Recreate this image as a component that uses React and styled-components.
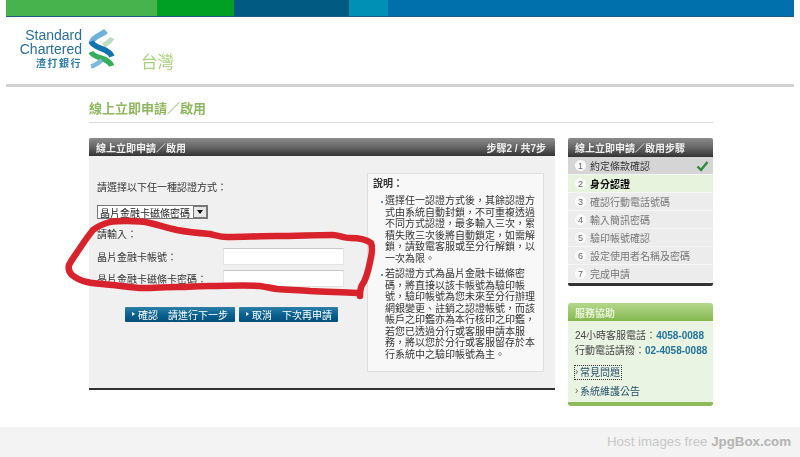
import React from "react";
import styled, { createGlobalStyle } from "styled-components";

const CJK = `"Liberation Sans", "Noto Sans CJK TC", sans-serif`;

const Global = createGlobalStyle`
  html, body { margin: 0; padding: 0; background: #fff; }
  body { font-family: ${CJK}; font-size: 10px; color: #333; }
  * { box-sizing: border-box; }
`;

const Page = styled.div`
  position: relative;
  width: 800px;
  height: 457px;
  overflow: hidden;
  display: flex;
  flex-direction: column;
  filter: blur(0.35px);
`;

const TopBar = styled.div`
  display: flex;
  height: 17px;
  margin: 0 6px 0 6px;
  border-bottom: 1px solid #1d5f82;
`;
const TopSeg = styled.div`
  width: ${(p) => p.$w}px;
  flex: ${(p) => (p.$w ? "none" : 1)};
  background: ${(p) => p.$c};
`;

const Brand = styled.header`
  height: 67px;
  margin: 0 6px;
  display: flex;
  align-items: flex-start;
  padding: 10px 0 0 0;
`;
const BrandWords = styled.div`
  width: 76px;
  text-align: right;
  color: #2b7098;
  font-size: 14px;
  line-height: 14px;
  padding-top: 1px;
  white-space: nowrap;
`;
const BrandCn = styled.div`
  font-size: 10px;
  font-weight: 700;
  letter-spacing: 1.5px;
  line-height: 16px;
  color: #2f7ea6;
`;
const Logo = styled.svg`
  width: 27px;
  height: 42px;
  margin: 1px 0 0 6px;
  flex: none;
`;
const Region = styled.div`
  margin: 25px 0 0 26px;
  color: #a8cf7c;
  font-size: 16.5px;
  line-height: 20px;
`;
const HeaderRule = styled.div`
  height: 3px;
  margin: 0 6px;
  background: #d2d2d2;
`;

const Content = styled.main`
  width: 624px;
  margin-left: 89px;
`;
const Title = styled.h1`
  margin: 14px 0 0;
  height: 21px;
  font-size: 13px;
  line-height: 16px;
  font-weight: 700;
  color: #8fb860;
  border-bottom: 1px solid #dcdcdc;
  box-sizing: content-box;
`;
const Columns = styled.div`
  margin-top: 15px;
  display: flex;
  gap: 13px;
`;

const MainPanel = styled.section`
  width: 466px;
  height: 252px;
  background: #f0f0f0;
  border-bottom: 2px solid #333;
  display: flex;
  flex-direction: column;
`;
const PanelHead = styled.div`
  height: 18px;
  flex: none;
  padding: 0 9px 0 7px;
  display: flex;
  align-items: center;
  justify-content: space-between;
  color: #eee;
  font-size: 10px;
  font-weight: 700;
  background: linear-gradient(#8b8b8b 0%, #666 50%, #333 100%);
  border-radius: 2px 2px 0 0;
`;
const PanelBody = styled.div`
  flex: 1;
  display: flex;
  padding: 17px 11px 0 8px;
`;
const FormCol = styled.div`
  width: 270px;
  color: #333;
`;
const Prompt = styled.div`
  height: 12px;
  margin-top: 9px;
  line-height: 12px;
`;
const SelectBox = styled.div`
  margin-top: 11px;
  width: 111px;
  height: 14px;
  background: #fff;
  border: 1px solid #777;
  display: flex;
  align-items: center;
  justify-content: space-between;
  padding-left: 2px;
  font-size: 10px;
  color: #222;
`;
const SelectArrow = styled.span`
  width: 14px;
  height: 12px;
  background: #e8e8e8;
  border: 1px solid #777;
  display: flex;
  align-items: center;
  justify-content: center;
  &::after {
    content: "";
    border: 3px solid transparent;
    border-top: 4px solid #111;
    border-bottom: 0;
  }
`;
const InputPrompt = styled.div`
  margin-top: 10px;
  line-height: 12px;
`;
const FieldRow = styled.label`
  display: flex;
  align-items: center;
  justify-content: space-between;
  width: 247px;
  height: 17px;
  margin-top: ${(p) => p.$mt}px;
`;
const TextInput = styled.input`
  width: 121px;
  height: 17px;
  border: 1px solid #e4e4e4;
  border-top-color: #c8c8c8;
  background: #fff;
  padding: 0 3px;
`;
const Buttons = styled.div`
  display: flex;
  gap: 4px;
  margin: 20px 0 0 28px;
`;
const Btn = styled.button`
  width: ${(p) => p.$w}px;
  height: 15px;
  border: 0;
  border-radius: 1px;
  padding: 0 0 1px 7px;
  display: flex;
  align-items: center;
  gap: 3px;
  white-space: pre;
  color: #fff;
  font: 10px ${CJK};
  background: linear-gradient(#2d7fa8 0%, #0b628f 50%, #014f7a 100%);
  &::before {
    content: "";
    border: 2px solid transparent;
    border-left: 3px solid #fff;
    border-right: 0;
  }
`;
const Note = styled.aside`
  width: 177px;
  height: 199px;
  background: #f8f8f8;
  border: 1px solid #dedede;
  padding: 3px 8px 0 5px;
  color: #333;
`;
const NoteTitle = styled.div`
  font-weight: 700;
  line-height: 13px;
  margin-bottom: 5px;
`;
const NoteList = styled.ul`
  list-style: none;
  margin: 0;
  padding: 0;
`;
const NoteItem = styled.li`
  position: relative;
  padding-left: 12px;
  margin-bottom: 4px;
  line-height: 11.5px;
  font-size: 10px;
  &::before {
    content: "";
    position: absolute;
    left: 8px;
    top: 6px;
    width: 2px;
    height: 2px;
    background: #6a8a9a;
  }
`;

const Side = styled.div`
  width: 145px;
  display: flex;
  flex-direction: column;
  gap: 17px;
`;
const StepsCard = styled.nav`
  border-bottom: 3px solid #333;
  border-radius: 0 0 2px 2px;
`;
const StepHead = styled(PanelHead)`
  height: 19px;
  justify-content: flex-start;
`;
const Step = styled.div`
  height: 18px;
  display: flex;
  align-items: center;
  padding: 0 4px 0 7px;
  gap: 4px;
  border-bottom: 1px solid #f6f6f6;
  font-size: 10px;
  background: ${(p) => (p.$state === "done" ? "#d5d5d5" : p.$state === "now" ? "#e8f3dd" : "#ececec")};
  color: ${(p) => (p.$state === "done" ? "#333" : p.$state === "now" ? "#111" : "#777")};
  font-weight: ${(p) => (p.$state === "now" ? 700 : 400)};
`;
const StepNum = styled.span`
  width: 11px;
  height: 11px;
  border-radius: 50%;
  background: #fafafa;
  color: #666;
  font-size: 9px;
  font-weight: 400;
  display: flex;
  align-items: center;
  justify-content: center;
  flex: none;
`;
const Check = styled.svg`
  width: 13px;
  height: 12px;
  margin-left: auto;
`;
const HelpCard = styled.section`
  height: 103px;
  background: #eaf4e2;
  border-bottom: 4px solid #8dbb5c;
  border-radius: 3px;
  overflow: hidden;
`;
const HelpHead = styled.div`
  height: 18px;
  padding: 0 7px;
  display: flex;
  align-items: center;
  color: #e8f3d8;
  font-weight: 700;
  font-size: 10px;
  background: linear-gradient(#b4d88c, #84b84f);
`;
const HelpBody = styled.div`
  padding: 7px 0 0 7px;
  color: #444;
`;
const Phone = styled.div`
  line-height: 15px;
  white-space: nowrap;
`;
const PhoneNum = styled.b`
  color: #24739a;
`;
const HelpLink = styled.a`
  display: block;
  width: fit-content;
  color: #27516d;
  margin-top: ${(p) => p.$mt}px;
  line-height: 13px;
  padding: 0 1px 0 5px;
  outline: ${(p) => (p.$focus ? "1px dotted #333" : "none")};
  position: relative;
  &::before {
    content: "›";
    position: absolute;
    left: 0;
    top: -1px;
    color: #666;
  }
`;

const Footer = styled.footer`
  margin-top: auto;
  height: 30px;
  background: #f3f3f3;
  color: #c6c6c6;
  font: 13.3px/30px "Liberation Sans", sans-serif;
  text-align: right;
  padding-right: 9px;
`;
const FooterBrand = styled.b`
  color: #b4b4b4;
`;
const Scribble = styled.svg`
  position: absolute;
  left: 0;
  top: 0;
  width: 800px;
  height: 457px;
  pointer-events: none;
`;

const steps = ["約定條款確認", "身分認證", "確認行動電話號碼", "輸入簡訊密碼", "驗印帳號確認", "設定使用者名稱及密碼", "完成申請"];

export default function App() {
  return (
    <Page>
      <Global />
      <TopBar>
        <TopSeg $w={151} $c="#46b34d" />
        <TopSeg $w={77} $c="#00a024" />
        <TopSeg $w={115} $c="#005a82" />
        <TopSeg $w={39} $c="#0090b5" />
        <TopSeg $c="#0070ac" />
      </TopBar>
      <Brand>
        <BrandWords>
          Standard<br />Chartered
          <BrandCn>渣打銀行</BrandCn>
        </BrandWords>
        <Logo viewBox="0 0 27 42" fill="none">
          <path d="M24 10C22 14 19 15 15.5 17.5" stroke="#bcdcc2" strokeWidth="5" />
          <path d="M18 3C14 7 5 8 3.5 14.5" stroke="#6fb0d8" strokeWidth="5.5" />
          <path d="M3 13.5C6 21 21 20 24 28.5" stroke="#0f73ad" strokeWidth="5.5" />
          <path d="M3 24C6 31 21 29 23.5 38" stroke="#35ad5c" strokeWidth="5.5" />
          <path d="M3 38.5C7 37.5 10.5 35 14 32" stroke="#7db8dd" strokeWidth="4.5" />
        </Logo>
        <Region>台灣</Region>
      </Brand>
      <HeaderRule />
      <Content>
        <Title>線上立即申請／啟用</Title>
        <Columns>
          <MainPanel>
            <PanelHead>
              <span>線上立即申請／啟用</span>
              <span>步驟2 / 共7步</span>
            </PanelHead>
            <PanelBody>
              <FormCol>
                <Prompt>請選擇以下任一種認證方式：</Prompt>
                <SelectBox>
                  晶片金融卡磁條密碼
                  <SelectArrow />
                </SelectBox>
                <InputPrompt>請輸入：</InputPrompt>
                <FieldRow $mt={7}>
                  晶片金融卡帳號：
                  <TextInput />
                </FieldRow>
                <FieldRow $mt={5}>
                  晶片金融卡磁條卡密碼：
                  <TextInput />
                </FieldRow>
                <Buttons>
                  <Btn $w={110}>確認　請進行下一步</Btn>
                  <Btn $w={99}>取消　下次再申請</Btn>
                </Buttons>
              </FormCol>
              <Note>
                <NoteTitle>說明：</NoteTitle>
                <NoteList>
                  <NoteItem>選擇任一認證方式後，其餘認證方式由系統自動封鎖，不可重複透過不同方式認證，最多輸入三次，累積失敗三次後將自動鎖定，如需解鎖，請致電客服或至分行解鎖，以一次為限。</NoteItem>
                  <NoteItem>若認證方式為晶片金融卡磁條密碼，將直接以該卡帳號為驗印帳號，驗印帳號為您未來至分行辦理網銀變更、註銷之認證帳號，而該帳戶之印鑑亦為本行核印之印鑑，若您已透過分行或客服申請本服務，將以您於分行或客服留存於本行系統中之驗印帳號為主。</NoteItem>
                </NoteList>
              </Note>
            </PanelBody>
          </MainPanel>
          <Side>
            <StepsCard>
              <StepHead>線上立即申請／啟用步驟</StepHead>
              {steps.map((s, i) => (
                <Step key={s} $state={i === 0 ? "done" : i === 1 ? "now" : "todo"}>
                  <StepNum>{i + 1}</StepNum>
                  {s}
                  {i === 0 && (
                    <Check viewBox="0 0 13 12">
                      <path d="M1.5 6.5 5 10 11.5 2" fill="none" stroke="#2e8b3c" strokeWidth="2.4" />
                    </Check>
                  )}
                </Step>
              ))}
            </StepsCard>
            <HelpCard>
              <HelpHead>服務協助</HelpHead>
              <HelpBody>
                <Phone>24小時客服電話：<PhoneNum>4058-0088</PhoneNum></Phone>
                <Phone>行動電話請撥：<PhoneNum>02-4058-0088</PhoneNum></Phone>
                <HelpLink $mt={8} $focus>常見問題</HelpLink>
                <HelpLink $mt={6}>系統維護公告</HelpLink>
              </HelpBody>
            </HelpCard>
          </Side>
        </Columns>
      </Content>
      <Footer>Host images free <FooterBrand>JpgBox.com</FooterBrand></Footer>
      <Scribble viewBox="0 0 800 457" fill="none">
        <path
          d="M360 296C360 291 360 289 362 285C366 280 368 272 370 262C372 254 373 248 371 243C366 239 358 238 350 238C344 238 338 235 333 235C315 235 295 236 277 236C260 236 243 237 227 237C220 237 215 235 210 234C198 233 188 232 177 230C168 228 158 225 150 223C142 221 135 221 127 221C120 221 115 221 110 222C103 224 98 226 93 230C88 236 84 242 80 248C76 254 72 259 69 265C68 269 69 272 72 275C77 279 82 281 87 282C96 284 104 284 113 285C123 286 133 288 143 288C154 288 166 287 177 287C188 287 199 286 210 286C227 286 244 285 260 286C266 287 271 288 277 289C288 290 299 290 310 291C326 292 342 292 357 293"
          stroke="#d8232d"
          strokeWidth="6.5"
          strokeLinejoin="round"
          strokeLinecap="round"
        />
      </Scribble>
    </Page>
  );
}
